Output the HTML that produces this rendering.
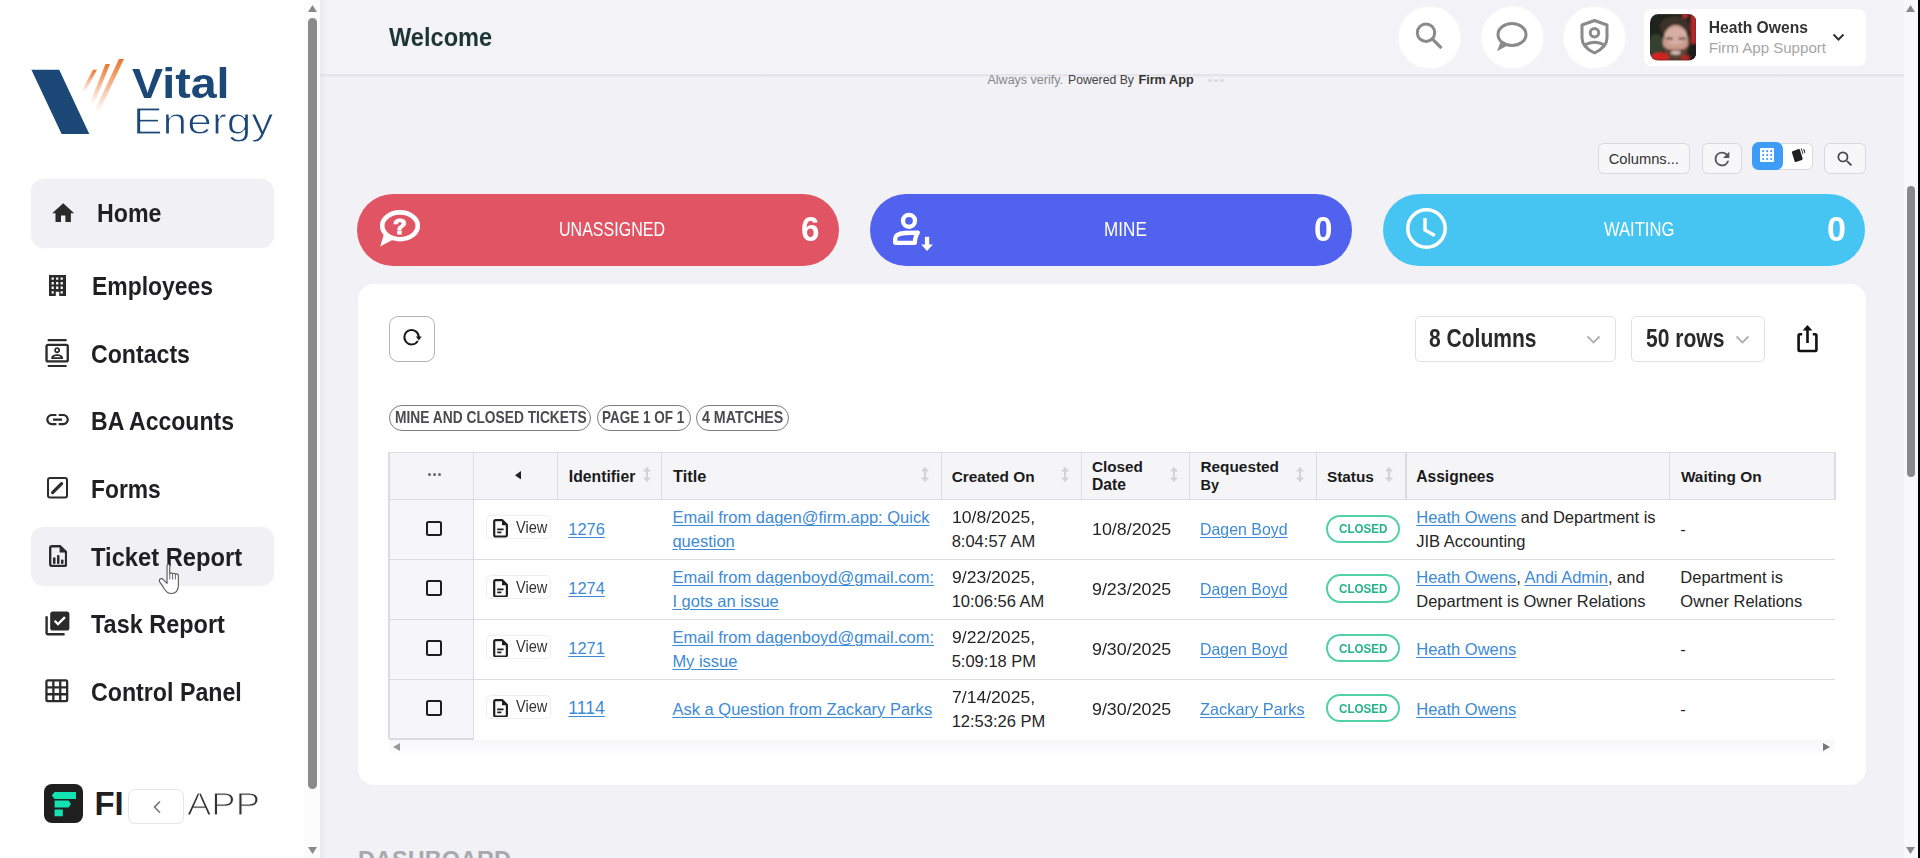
<!DOCTYPE html><html><head><meta charset="utf-8"><style>
html,body{margin:0;padding:0;}
body{width:1920px;height:858px;overflow:hidden;position:relative;background:#f1f1f6;font-family:"Liberation Sans",sans-serif;}
.t{position:absolute;white-space:nowrap;line-height:1;}
svg{display:block;}
u{text-decoration:underline;text-underline-offset:2px;text-decoration-thickness:1px;}
</style></head><body>
<div style="position:absolute;left:0px;top:0px;width:304px;height:858px;background:#fff;"></div>
<div style="position:absolute;left:304px;top:0px;width:16px;height:858px;background:#fcfcfd;"></div>
<div style="position:absolute;left:308px;top:17.7px;width:8.5px;height:771px;background:#8a8a8a;border-radius:5px;"></div>
<svg style="position:absolute;left:308px;top:5px;" width="9" height="7" viewBox="0 0 9 7"><polygon points="4.5,0 9,7 0,7" fill="#8a8a8a"/></svg>
<svg style="position:absolute;left:308px;top:847px;" width="9" height="7" viewBox="0 0 9 7"><polygon points="0,0 9,0 4.5,7" fill="#8a8a8a"/></svg>
<svg style="position:absolute;left:0px;top:0px;" width="300" height="160" viewBox="0 0 300 160">
<defs>
<linearGradient id="og1" x1="0" y1="0" x2="0" y2="1"><stop offset="0" stop-color="#e8772e"/><stop offset="1" stop-color="#e8772e" stop-opacity="0"/></linearGradient>
</defs>
<polygon points="31.4,69.8 59.2,69.8 89.3,133.9 61.6,133.9" fill="#1b4877"/>
<polygon points="93,69.8 97,69.8 85,92 81,92" fill="url(#og1)"/>
<polygon points="105.5,64 110,64 94,104 89.5,104" fill="url(#og1)"/>
<polygon points="119,59 124,59 99,112 94,112" fill="url(#og1)"/>
</svg>
<div class="t" style="left:131.60px;top:63.30px;font-size:42.00px;font-weight:700;color:#1b4877;transform:scale(1.1086,1.0000);transform-origin:0 35.55px;">Vital</div>
<div class="t" style="left:133.20px;top:102.90px;font-size:37.00px;font-weight:400;color:#1b4877;transform:scale(1.1983,1.0000);transform-origin:0 31.32px;-webkit-text-stroke:0.9px #fff;">Energy</div>
<div style="position:absolute;left:31px;top:179px;width:243px;height:69px;background:#f1f1f5;border-radius:13px;box-shadow:0 0 3px rgba(0,0,0,0.035);"></div>
<div style="position:absolute;left:31px;top:527px;width:243px;height:59px;background:#f1f1f5;border-radius:13px;box-shadow:0 0 3px rgba(0,0,0,0.035);"></div>
<div class="t" style="left:97.30px;top:202.34px;font-size:24.00px;font-weight:700;color:#1f1f24;transform:scale(0.9670,1.0900);transform-origin:0 20.32px;">Home</div>
<div class="t" style="left:91.80px;top:275.43px;font-size:24.00px;font-weight:700;color:#1f1f24;transform:scale(0.9546,1.0900);transform-origin:0 20.32px;">Employees</div>
<div class="t" style="left:91.20px;top:342.93px;font-size:24.00px;font-weight:700;color:#1f1f24;transform:scale(0.9640,1.0900);transform-origin:0 20.32px;">Contacts</div>
<div class="t" style="left:91.20px;top:409.93px;font-size:24.00px;font-weight:700;color:#1f1f24;transform:scale(0.9604,1.0900);transform-origin:0 20.32px;">BA Accounts</div>
<div class="t" style="left:91.20px;top:477.65px;font-size:24.00px;font-weight:700;color:#1f1f24;transform:scale(0.9516,1.0900);transform-origin:0 20.32px;">Forms</div>
<div class="t" style="left:91.20px;top:546.15px;font-size:24.00px;font-weight:700;color:#1f1f24;transform:scale(0.9886,1.0900);transform-origin:0 20.32px;">Ticket Report</div>
<div class="t" style="left:91.20px;top:613.04px;font-size:24.00px;font-weight:700;color:#1f1f24;transform:scale(0.9774,1.0900);transform-origin:0 20.32px;">Task Report</div>
<div class="t" style="left:91.20px;top:681.15px;font-size:24.00px;font-weight:700;color:#1f1f24;transform:scale(0.9667,1.0900);transform-origin:0 20.32px;">Control Panel</div>
<svg style="position:absolute;left:49.8px;top:199.7px;" width="26.4" height="26.4" viewBox="0 0 24 24"><path fill="#2b2b2b" d="M10 20v-6h4v6h5v-8h3L12 3 2 12h3v8z"/></svg>
<svg style="position:absolute;left:49.4px;top:275px;" width="17" height="21" viewBox="0 0 17 21"><path fill="#2b2b2b" fill-rule="evenodd" d="M0 0H17V21H10.2V16.8H6.8V21H0Z M2.60 2.40h2.2v2.4h-2.2z M7.10 2.40h2.2v2.4h-2.2z M11.60 2.40h2.2v2.4h-2.2z M2.60 7.00h2.2v2.4h-2.2z M7.10 7.00h2.2v2.4h-2.2z M11.60 7.00h2.2v2.4h-2.2z M2.60 11.60h2.2v2.4h-2.2z M7.10 11.60h2.2v2.4h-2.2z M11.60 11.60h2.2v2.4h-2.2z M2.60 16.20h2.2v2.4h-2.2z M11.60 16.20h2.2v2.4h-2.2z "/></svg>
<svg style="position:absolute;left:43.2px;top:338.7px;" width="28.3" height="28.3" viewBox="0 0 24 24"><path fill="#2b2b2b" d="M20 0H4v2h16V0zM4 24h16v-2H4v2zM20 4H4c-1.1 0-2 .9-2 2v12c0 1.1.9 2 2 2h16c1.1 0 2-.9 2-2V6c0-1.1-.9-2-2-2zm0 14H4V6h16v12zm-8-6c1.38 0 2.5-1.12 2.5-2.5S13.38 7 12 7 9.5 8.12 9.5 9.5 10.62 12 12 12zm0-3.5c.55 0 1 .45 1 1s-.45 1-1 1-1-.45-1-1 .45-1 1-1zm5 7.49C17 13.9 13.69 13 12 13s-5 .9-5 2.99V17h10v-1.01zm-8.19-.49c.61-.52 2.03-1 3.19-1 1.17 0 2.59.48 3.2 1H8.81z"/></svg>
<svg style="position:absolute;left:44.3px;top:406.3px;" width="27.1" height="27.1" viewBox="0 0 24 24"><path fill="#2b2b2b" d="M3.9 12c0-1.71 1.39-3.1 3.1-3.1h4V7H7c-2.76 0-5 2.24-5 5s2.24 5 5 5h4v-1.9H7c-1.71 0-3.1-1.39-3.1-3.1zM8 13h8v-2H8v2zm9-6h-4v1.9h4c1.71 0 3.1 1.39 3.1 3.1s-1.39 3.1-3.1 3.1h-4V17h4c2.76 0 5-2.24 5-5s-2.24-5-5-5z"/></svg>
<svg style="position:absolute;left:47.2px;top:477px;" width="21" height="21.5" viewBox="0 0 21 21.5"><rect x="1" y="1" width="19" height="19.5" rx="2" fill="none" stroke="#2b2b2b" stroke-width="2"/><path d="M5.6 15.6 L14.6 6.6" stroke="#2b2b2b" stroke-width="3.2" stroke-linecap="round"/></svg>
<svg style="position:absolute;left:48.6px;top:544.5px;" width="18.3" height="22.2" viewBox="0 0 18.3 22.2"><path d="M1.2 3 Q1.2 1.2 3 1.2 H11 L17.1 7 V19.2 Q17.1 21 15.3 21 H3 Q1.2 21 1.2 19.2 Z" fill="none" stroke="#2b2b2b" stroke-width="2.4"/><path d="M10.6 1 V7.6 H17.3 Z" fill="#2b2b2b"/><rect x="4" y="12.3" width="2.5" height="6.8" rx="1" fill="#2b2b2b"/><rect x="8" y="10" width="2.5" height="9.1" rx="1" fill="#2b2b2b"/><rect x="12" y="14.5" width="2.5" height="4.6" rx="1" fill="#2b2b2b"/></svg>
<svg style="position:absolute;left:43px;top:608.9px;" width="28.8" height="28.8" viewBox="0 0 24 24"><path fill="#2b2b2b" d="M20 2H8c-1.1 0-2 .9-2 2v12c0 1.1.9 2 2 2h12c1.1 0 2-.9 2-2V4c0-1.1-.9-2-2-2zm-7.53 12L9 10.5l1.4-1.41 2.07 2.08L17.6 6 19 7.41 12.47 14zM4 20h14v2H4c-1.1 0-2-.9-2-2V6h2v14z"/></svg>
<svg style="position:absolute;left:43.1px;top:677.1px;" width="27.6" height="27.6" viewBox="0 0 24 24"><path fill="#2b2b2b" d="M20 2H4c-1.1 0-2 .9-2 2v16c0 1.1.9 2 2 2h16c1.1 0 2-.9 2-2V4c0-1.1-.9-2-2-2zM8 20H4v-4h4v4zm0-6H4v-4h4v4zm0-6H4V4h4v4zm6 12h-4v-4h4v4zm0-6h-4v-4h4v4zm0-6h-4V4h4v4zm6 12h-4v-4h4v4zm0-6h-4v-4h4v4zm0-6h-4V4h4v4z"/></svg>
<div style="position:absolute;left:43.8px;top:783.6px;width:39.3px;height:39.4px;background:#1f1f1f;border-radius:8px;"></div>
<svg style="position:absolute;left:43.8px;top:783.6px;" width="39.3" height="39.4" viewBox="0 0 39.3 39.4"><path fill="#12e3b0" d="M10.6 8 H32 V15 H10.6 L7.8 11.5 Z M10.6 16.6 H24.6 L27 20.1 L24.6 23.6 H10.6 Z M10.6 25.5 H18.8 V32.3 H10.6 Z"/></svg>
<div class="t" style="left:94.40px;top:787.80px;font-size:32.86px;font-weight:700;color:#1f1f1f;">FI</div>
<div class="t" style="left:187.30px;top:788.81px;font-size:31.00px;font-weight:400;color:#333;transform:scale(1.1765,1.0000);transform-origin:0 26.24px;-webkit-text-stroke:1px #fff;">APP</div>
<div style="position:absolute;left:127.7px;top:788.9px;width:56.7px;height:35.2px;background:#fff;border:1px solid #e6e6ea;border-radius:7px;box-sizing:border-box;"></div>
<svg style="position:absolute;left:151px;top:799.8px;" width="12" height="14.2" viewBox="0 0 12 14.2"><path d="M9 1.5 L3.5 7.1 L9 12.7" fill="none" stroke="#777" stroke-width="1.6"/></svg>
<div style="position:absolute;left:320px;top:0px;width:1584px;height:75px;background:#f2f2f7;"></div>
<div style="position:absolute;left:320px;top:73.5px;width:1584px;height:2px;background:#e4e4ea;"></div>
<div style="position:absolute;left:320px;top:75.5px;width:1584px;height:2.5px;background:linear-gradient(rgba(0,0,0,0.03),rgba(0,0,0,0));"></div>
<div class="t" style="left:389.00px;top:27.36px;font-size:23.60px;font-weight:700;color:#1e3535;transform:scale(1.0000,1.1100);transform-origin:0 19.98px;">Welcome</div>
<div style="position:absolute;left:320px;top:0px;width:6px;height:858px;background:linear-gradient(90deg,rgba(0,0,0,0.035),rgba(0,0,0,0));"></div>
<div style="position:absolute;left:1398.5px;top:7px;width:61px;height:61px;background:#fff;border-radius:50%;box-shadow:0 0 2px 1px rgba(255,255,255,0.7);"></div>
<div style="position:absolute;left:1481.5px;top:7px;width:61px;height:61px;background:#fff;border-radius:50%;box-shadow:0 0 2px 1px rgba(255,255,255,0.7);"></div>
<div style="position:absolute;left:1564.0px;top:7px;width:61px;height:61px;background:#fff;border-radius:50%;box-shadow:0 0 2px 1px rgba(255,255,255,0.7);"></div>
<svg style="position:absolute;left:1410px;top:16px;" width="40" height="40" viewBox="0 0 40 40"><circle cx="16" cy="16.7" r="8.7" fill="none" stroke="#8a8a8a" stroke-width="3"/><path d="M22.5 23.2 L31.5 32.2" stroke="#8a8a8a" stroke-width="3.2" stroke-linecap="butt"/></svg>
<svg style="position:absolute;left:1492px;top:16px;" width="40" height="40" viewBox="0 0 40 40"><ellipse cx="20" cy="18.5" rx="14" ry="11" fill="none" stroke="#8a8a8a" stroke-width="3"/><path d="M8.5 26 L5 35.2 L15.5 29.5 Z" fill="#8a8a8a"/></svg>
<svg style="position:absolute;left:1574px;top:16px;" width="40" height="40" viewBox="0 0 40 40"><path d="M20.5 4.5 L33 9 V22 Q33 31 20.5 37 Q8 31 8 22 V9 Z" fill="none" stroke="#8a8a8a" stroke-width="3" stroke-linejoin="round"/><circle cx="20.5" cy="16.7" r="4.2" fill="none" stroke="#8a8a8a" stroke-width="3"/><path d="M10.5 29 Q20.5 23.5 30.5 29" fill="none" stroke="#8a8a8a" stroke-width="3"/></svg>
<div style="position:absolute;left:1643.75px;top:9.4px;width:222px;height:56.2px;background:#fff;border-radius:7px;"></div>
<svg style="position:absolute;left:1649.5px;top:14px;" width="46.5" height="46.7" viewBox="0 0 47 47">
<defs><clipPath id="av"><rect width="47" height="47" rx="8.5"/></clipPath>
<filter id="bl" x="-20%" y="-20%" width="140%" height="140%"><feGaussianBlur stdDeviation="1.2"/></filter></defs>
<g clip-path="url(#av)">
<rect width="47" height="47" fill="#1f231d"/>
<g filter="url(#bl)">
<ellipse cx="6" cy="32" rx="8" ry="12" fill="#34402e"/>
<rect x="41" y="0" width="6" height="30" fill="#b82626"/>
<rect x="33" y="-2" width="5" height="6" fill="#c62a2a"/>
<ellipse cx="25" cy="13" rx="15" ry="11" fill="#3b3029"/>
<ellipse cx="26" cy="28" rx="13" ry="17" fill="#c99b8c"/>
<ellipse cx="26" cy="22" rx="11" ry="9" fill="#d6aea3"/>
<rect x="16" y="23.5" width="7" height="2.5" fill="#7a5a50"/>
<rect x="29" y="23.5" width="7" height="2.5" fill="#7a5a50"/>
<path d="M13 31 Q14 46 26 47 Q38 46 39 31 Q36 37 26 36 Q16 37 13 31 Z" fill="#5e4234"/>
<ellipse cx="26" cy="39" rx="5" ry="2" fill="#d9c0b5"/>
<path d="M0 47 L2 41 Q10 37 17 40 L20 47 Z" fill="#d42424"/>
<path d="M31 47 L33 42 Q38 40 41 43 L42 47 Z" fill="#b62222"/>
<rect x="40" y="30" width="7" height="17" fill="#1b1b1b"/>
</g>
</g></svg>
<div class="t" style="left:1708.75px;top:19.77px;font-size:15.67px;font-weight:700;color:#333;transform:scale(1.0000,1.0600);transform-origin:0 13.26px;">Heath Owens</div>
<div class="t" style="left:1708.75px;top:40.01px;font-size:15.07px;font-weight:400;color:#a6a6a6;">Firm App Support</div>
<svg style="position:absolute;left:1831.5px;top:32.5px;" width="13" height="9" viewBox="0 0 13 9"><path d="M1.5 1.5 L6.5 6.5 L11.5 1.5" fill="none" stroke="#333" stroke-width="2"/></svg>
<div style="position:absolute;left:320px;top:75px;width:1584px;height:20px;overflow:hidden;">
<div style="position:absolute;left:-320px;top:-75px;width:1920px;height:100px;">
<div class="t" style="left:987.50px;top:74.40px;font-size:12.50px;font-weight:400;color:#888;">Always verify.</div>
<div class="t" style="left:1068.00px;top:74.41px;font-size:12.24px;font-weight:400;color:#444;">Powered By</div>
<div class="t" style="left:1138.40px;top:74.41px;font-size:12.71px;font-weight:700;color:#333;">Firm App</div>
</div></div>
<div style="position:absolute;left:1208px;top:79px;width:4px;height:3px;background:#dcdce2;border-radius:2px;"></div>
<div style="position:absolute;left:1214px;top:79px;width:4px;height:3px;background:#dcdce2;border-radius:2px;"></div>
<div style="position:absolute;left:1220px;top:79px;width:4px;height:3px;background:#dcdce2;border-radius:2px;"></div>
<div style="position:absolute;left:1904px;top:0px;width:14px;height:858px;background:#f8f8fa;"></div>
<div style="position:absolute;left:1918px;top:0px;width:2px;height:858px;background:#000;"></div>
<div style="position:absolute;left:1906.5px;top:185.8px;width:8px;height:290.8px;background:#8a8a8a;border-radius:4px;"></div>
<svg style="position:absolute;left:1906px;top:5px;" width="9" height="7" viewBox="0 0 9 7"><polygon points="4.5,0 9,7 0,7" fill="#8a8a8a"/></svg>
<svg style="position:absolute;left:1906px;top:847px;" width="9" height="7" viewBox="0 0 9 7"><polygon points="0,0 9,0 4.5,7" fill="#8a8a8a"/></svg>
<div style="position:absolute;left:1597.5px;top:143.4px;width:92.8px;height:31px;background:#f7f7f9;border:1px solid #d8d8dd;border-radius:6px;box-sizing:border-box;"></div>
<div class="t" style="left:1608.75px;top:152.01px;font-size:14.70px;font-weight:400;color:#333;">Columns...</div>
<div style="position:absolute;left:1701.6px;top:143.4px;width:40.7px;height:31px;background:#f7f7f9;border:1px solid #d8d8dd;border-radius:6px;box-sizing:border-box;"></div>
<svg style="position:absolute;left:1711px;top:148px;" width="22" height="22" viewBox="0 0 24 24"><path fill="#555" d="M17.65 6.35A7.958 7.958 0 0 0 12 4a8 8 0 1 0 7.73 10h-2.08A6 6 0 1 1 12 6c1.66 0 3.14.69 4.22 1.78L13 11h7V4l-2.35 2.35z"/></svg>
<div style="position:absolute;left:1751.6px;top:143.4px;width:61.4px;height:26.8px;background:#fff;border:1px solid #d8d8dd;border-radius:6px;box-sizing:border-box;"></div>
<div style="position:absolute;left:1751.6px;top:141.6px;width:31.4px;height:28.7px;background:#3d9cf6;border-radius:7px;"></div>
<svg style="position:absolute;left:1760px;top:148px;" width="14.2" height="14" viewBox="0 0 14.2 14"><rect width="14.2" height="14" rx="1" fill="#fff"/><g fill="#3d9cf6"><circle cx="3.2" cy="3.2" r="1.1"/><circle cx="3.2" cy="7.1" r="1.1"/><circle cx="3.2" cy="11.0" r="1.1"/><circle cx="7.2" cy="3.2" r="1.1"/><circle cx="7.2" cy="7.1" r="1.1"/><circle cx="7.2" cy="11.0" r="1.1"/><circle cx="11.2" cy="3.2" r="1.1"/><circle cx="11.2" cy="7.1" r="1.1"/><circle cx="11.2" cy="11.0" r="1.1"/></g></svg>
<svg style="position:absolute;left:1790px;top:146px;" width="16" height="18" viewBox="0 0 16 18"><path d="M2.6 5.2 L8.6 3 Q9.6 2.7 9.9 3.7 L12.6 12.6 Q12.9 13.6 11.9 13.9 L5.9 16 Q4.9 16.3 4.6 15.3 L1.9 6.4 Q1.6 5.5 2.6 5.2 Z" fill="#1f1f1f"/><path d="M10.8 2.5 L11.6 2.2 L13.4 7.8 L12.8 8.4 Z M13.2 3.2 L14.2 2.9 L15.4 6.5 L14.6 7.2 Z" fill="#1f1f1f"/></svg>
<div style="position:absolute;left:1824.4px;top:143.4px;width:41.2px;height:31px;background:#f7f7f9;border:1px solid #d8d8dd;border-radius:6px;box-sizing:border-box;"></div>
<svg style="position:absolute;left:1835px;top:149px;" width="20" height="20" viewBox="0 0 24 24"><path fill="#444" d="M15.5 14h-.79l-.28-.27A6.471 6.471 0 0 0 16 9.5 6.5 6.5 0 1 0 9.5 16c1.61 0 3.09-.59 4.23-1.57l.27.28v.79l5 4.99L20.49 19l-4.99-5zm-6 0C7.01 14 5 11.99 5 9.5S7.01 5 9.5 5 14 7.01 14 9.5 11.99 14 9.5 14z"/></svg>
<div style="position:absolute;left:357.4px;top:193.5px;width:482px;height:72.3px;background:#e05463;border-radius:37px;"></div>
<div class="t" style="left:558.80px;top:221.23px;font-size:18.00px;font-weight:400;color:#fff;transform:scale(0.8908,1.0900);transform-origin:0 15.24px;">UNASSIGNED</div>
<div class="t" style="left:801.00px;top:212.50px;font-size:33.00px;font-weight:700;color:#fff;transform:scale(1.0082,1.0500);transform-origin:0 27.93px;">6</div>
<div style="position:absolute;left:869.8px;top:193.5px;width:482px;height:72.3px;background:#5062ee;border-radius:37px;"></div>
<div class="t" style="left:1104.00px;top:221.23px;font-size:18.00px;font-weight:400;color:#fff;transform:scale(0.9511,1.0900);transform-origin:0 15.24px;">MINE</div>
<div class="t" style="left:1314.00px;top:212.50px;font-size:33.00px;font-weight:700;color:#fff;transform:scale(1.0027,1.0500);transform-origin:0 27.93px;">0</div>
<div style="position:absolute;left:1383.4px;top:193.5px;width:482px;height:72.3px;background:#46c5f3;border-radius:37px;"></div>
<div class="t" style="left:1603.60px;top:221.23px;font-size:18.00px;font-weight:400;color:#fff;transform:scale(0.9214,1.0900);transform-origin:0 15.24px;">WAITING</div>
<div class="t" style="left:1827.00px;top:212.50px;font-size:33.00px;font-weight:700;color:#fff;transform:scale(1.0354,1.0500);transform-origin:0 27.93px;">0</div>
<svg style="position:absolute;left:376px;top:206px;" width="48" height="44" viewBox="0 0 48 44"><ellipse cx="24" cy="19.8" rx="17.8" ry="13.4" fill="none" stroke="#fff" stroke-width="4.6"/><path d="M8.5 26 L4.2 40.5 L19 32.5 Z" fill="#fff"/><text x="24" y="28.3" text-anchor="middle" font-family="Liberation Sans" font-weight="700" font-size="22" fill="#fff" stroke="#fff" stroke-width="1.2">?</text></svg>
<svg style="position:absolute;left:885px;top:205px;" width="60" height="53" viewBox="0 0 60 53"><circle cx="24" cy="15.8" r="6" fill="none" stroke="#fff" stroke-width="4.3"/><path d="M10.2 37.8 V33.5 Q10.2 28.8 20 28 L32.8 27.6 Q30.2 31 29.8 37.8 Z" fill="none" stroke="#fff" stroke-width="4.3" stroke-linejoin="round"/><rect x="39.9" y="31.8" width="4.3" height="8.5" fill="#fff"/><polygon points="36.2,39.4 47.9,39.4 42,46" fill="#fff"/></svg>
<svg style="position:absolute;left:1404px;top:206px;" width="46" height="46" viewBox="0 0 46 46"><circle cx="22.5" cy="22.5" r="18.7" fill="none" stroke="#fff" stroke-width="3.5"/><path d="M21 12 V24 L30.8 29.5" fill="none" stroke="#fff" stroke-width="3.4"/></svg>
<div style="position:absolute;left:358px;top:284px;width:1508px;height:501px;background:#fff;border-radius:16px;"></div>
<div style="position:absolute;left:389px;top:315.8px;width:46.4px;height:46.4px;background:#fff;border:1.6px solid #b3b3b6;border-radius:9px;box-sizing:border-box;"></div>
<svg style="position:absolute;left:401px;top:327px;" width="22" height="22" viewBox="0 0 22 22"><path d="M16.8 13.9 A7.2 7.2 0 1 1 17.8 10.3" fill="none" stroke="#1a1a1a" stroke-width="1.9"/><path d="M14.9 9.6 L20.7 9.6 L17.8 13.4 Z" fill="#1a1a1a"/></svg>
<div style="position:absolute;left:389px;top:404.8px;width:202.39999999999998px;height:26.2px;border:1.8px solid #7c7c82;border-radius:14px;box-sizing:border-box;"></div>
<div class="t" style="left:394.80px;top:409.89px;font-size:15.00px;font-weight:700;color:#4a4a50;transform:scale(0.9185,1.0800);transform-origin:0 12.70px;">MINE AND CLOSED TICKETS</div>
<div style="position:absolute;left:596.6px;top:404.8px;width:94.0px;height:26.2px;border:1.8px solid #7c7c82;border-radius:14px;box-sizing:border-box;"></div>
<div class="t" style="left:602.40px;top:409.89px;font-size:15.00px;font-weight:700;color:#4a4a50;transform:scale(0.8993,1.0800);transform-origin:0 12.70px;">PAGE 1 OF 1</div>
<div style="position:absolute;left:696.4px;top:404.8px;width:92.20000000000005px;height:26.2px;border:1.8px solid #7c7c82;border-radius:14px;box-sizing:border-box;"></div>
<div class="t" style="left:702.00px;top:409.89px;font-size:15.00px;font-weight:700;color:#4a4a50;transform:scale(0.9492,1.0800);transform-origin:0 12.70px;">4 MATCHES</div>
<div style="position:absolute;left:1414.7px;top:316.3px;width:201px;height:46px;background:#fff;border:1px solid #e2e2e6;border-radius:5px;box-sizing:border-box;"></div>
<div class="t" style="left:1428.75px;top:328.69px;font-size:22.00px;font-weight:700;color:#2a2a2a;transform:scale(0.9560,1.1300);transform-origin:0 18.62px;">8 Columns</div>
<svg style="position:absolute;left:1586px;top:335px;" width="15" height="9" viewBox="0 0 15 9"><path d="M1.5 1.5 L7.5 7.5 L13.5 1.5" fill="none" stroke="#b0b0b0" stroke-width="1.8"/></svg>
<div style="position:absolute;left:1631.4px;top:316.3px;width:133.2px;height:46px;background:#fff;border:1px solid #e2e2e6;border-radius:5px;box-sizing:border-box;"></div>
<div class="t" style="left:1646.00px;top:328.69px;font-size:22.00px;font-weight:700;color:#2a2a2a;transform:scale(0.9579,1.1300);transform-origin:0 18.62px;">50 rows</div>
<svg style="position:absolute;left:1734.5px;top:335px;" width="15" height="9" viewBox="0 0 15 9"><path d="M1.5 1.5 L7.5 7.5 L13.5 1.5" fill="none" stroke="#b0b0b0" stroke-width="1.8"/></svg>
<svg style="position:absolute;left:1795px;top:322px;" width="24" height="31" viewBox="0 0 24 31"><path d="M7.2 12.3 H4.8 Q3.6 12.3 3.6 13.5 V27.8 Q3.6 29 4.8 29 H20.2 Q21.4 29 21.4 27.8 V13.5 Q21.4 12.3 20.2 12.3 H17.8" fill="none" stroke="#111" stroke-width="2.6" stroke-linejoin="round"/><path d="M12.5 21 V6" stroke="#111" stroke-width="2.6"/><path d="M7.6 8.4 L12.5 3 L17.4 8.4 Z" fill="#111"/></svg>
<div style="position:absolute;left:389px;top:452px;width:1446px;height:47.5px;background:#f5f5f8;"></div>
<div style="position:absolute;left:389px;top:499.5px;width:84.69999999999999px;height:239.5px;background:#f6f6f8;"></div>
<div style="position:absolute;left:389px;top:451.5px;width:1446px;height:1.2px;background:#dcdce0;"></div>
<div style="position:absolute;left:388.4px;top:452px;width:1.2px;height:47.5px;background:#dcdce0;"></div>
<div style="position:absolute;left:473.09999999999997px;top:452px;width:1.2px;height:47.5px;background:#dcdce0;"></div>
<div style="position:absolute;left:557.0px;top:452px;width:1.2px;height:47.5px;background:#dcdce0;"></div>
<div style="position:absolute;left:661.0px;top:452px;width:1.2px;height:47.5px;background:#dcdce0;"></div>
<div style="position:absolute;left:940.6999999999999px;top:452px;width:1.2px;height:47.5px;background:#dcdce0;"></div>
<div style="position:absolute;left:1081.3000000000002px;top:452px;width:1.2px;height:47.5px;background:#dcdce0;"></div>
<div style="position:absolute;left:1189.0px;top:452px;width:1.2px;height:47.5px;background:#dcdce0;"></div>
<div style="position:absolute;left:1315.6000000000001px;top:452px;width:1.2px;height:47.5px;background:#dcdce0;"></div>
<div style="position:absolute;left:1405.4px;top:452px;width:1.2px;height:47.5px;background:#dcdce0;"></div>
<div style="position:absolute;left:1668.9px;top:452px;width:1.2px;height:47.5px;background:#dcdce0;"></div>
<div style="position:absolute;left:1834.4px;top:452px;width:1.2px;height:47.5px;background:#dcdce0;"></div>
<div style="position:absolute;left:389px;top:498.9px;width:1446px;height:1.2px;background:#dcdce0;"></div>
<div style="position:absolute;left:389px;top:558.6999999999999px;width:1446px;height:1.2px;background:#dcdce0;"></div>
<div style="position:absolute;left:389px;top:618.6px;width:1446px;height:1.2px;background:#dcdce0;"></div>
<div style="position:absolute;left:389px;top:678.6px;width:1446px;height:1.2px;background:#dcdce0;"></div>
<div style="position:absolute;left:389px;top:738.4px;width:84.69999999999999px;height:1.2px;background:#dcdce0;"></div>
<div style="position:absolute;left:388.4px;top:499.5px;width:1.2px;height:239.5px;background:#dcdce0;"></div>
<div style="position:absolute;left:473.09999999999997px;top:499.5px;width:1.2px;height:239.5px;background:#dcdce0;"></div>
<div style="position:absolute;left:427.5px;top:472.9px;width:3.2px;height:3.2px;background:#6a6a6a;border-radius:50%;"></div>
<div style="position:absolute;left:432.7px;top:472.9px;width:3.2px;height:3.2px;background:#6a6a6a;border-radius:50%;"></div>
<div style="position:absolute;left:437.9px;top:472.9px;width:3.2px;height:3.2px;background:#6a6a6a;border-radius:50%;"></div>
<svg style="position:absolute;left:515.4px;top:470.7px;" width="6" height="8.5" viewBox="0 0 6 8.5"><polygon points="6,0 6,8.5 0,4.25" fill="#222"/></svg>
<div class="t" style="left:568.80px;top:468.60px;font-size:15.75px;font-weight:700;color:#1a1a1a;">Identifier</div>
<div class="t" style="left:673.00px;top:467.60px;font-size:16.34px;font-weight:700;color:#1a1a1a;">Title</div>
<div class="t" style="left:951.70px;top:468.60px;font-size:15.40px;font-weight:700;color:#1a1a1a;">Created On</div>
<div class="t" style="left:1092.00px;top:458.90px;font-size:15.24px;font-weight:700;color:#1a1a1a;">Closed</div>
<div class="t" style="left:1092.00px;top:477.31px;font-size:15.68px;font-weight:700;color:#1a1a1a;">Date</div>
<div class="t" style="left:1200.50px;top:458.91px;font-size:15.35px;font-weight:700;color:#1a1a1a;">Requested</div>
<div class="t" style="left:1200.50px;top:478.30px;font-size:14.47px;font-weight:700;color:#1a1a1a;">By</div>
<div class="t" style="left:1326.90px;top:468.60px;font-size:15.38px;font-weight:700;color:#1a1a1a;">Status</div>
<div class="t" style="left:1416.25px;top:468.61px;font-size:15.59px;font-weight:700;color:#1a1a1a;">Assignees</div>
<div class="t" style="left:1680.90px;top:468.62px;font-size:15.40px;font-weight:700;color:#1a1a1a;">Waiting On</div>
<svg style="position:absolute;left:642.4px;top:465.5px;" width="10" height="17" viewBox="0 0 10 17"><path d="M5 2 V15" stroke="#d4d4d8" stroke-width="2"/><path d="M1 5.5 L5 0.8 L9 5.5 Z M1 11.5 L5 16.2 L9 11.5 Z" fill="#d4d4d8"/></svg>
<svg style="position:absolute;left:920.3px;top:465.5px;" width="10" height="17" viewBox="0 0 10 17"><path d="M5 2 V15" stroke="#d4d4d8" stroke-width="2"/><path d="M1 5.5 L5 0.8 L9 5.5 Z M1 11.5 L5 16.2 L9 11.5 Z" fill="#d4d4d8"/></svg>
<svg style="position:absolute;left:1060.3px;top:465.5px;" width="10" height="17" viewBox="0 0 10 17"><path d="M5 2 V15" stroke="#d4d4d8" stroke-width="2"/><path d="M1 5.5 L5 0.8 L9 5.5 Z M1 11.5 L5 16.2 L9 11.5 Z" fill="#d4d4d8"/></svg>
<svg style="position:absolute;left:1168.7px;top:465.5px;" width="10" height="17" viewBox="0 0 10 17"><path d="M5 2 V15" stroke="#d4d4d8" stroke-width="2"/><path d="M1 5.5 L5 0.8 L9 5.5 Z M1 11.5 L5 16.2 L9 11.5 Z" fill="#d4d4d8"/></svg>
<svg style="position:absolute;left:1295px;top:465.5px;" width="10" height="17" viewBox="0 0 10 17"><path d="M5 2 V15" stroke="#d4d4d8" stroke-width="2"/><path d="M1 5.5 L5 0.8 L9 5.5 Z M1 11.5 L5 16.2 L9 11.5 Z" fill="#d4d4d8"/></svg>
<svg style="position:absolute;left:1384.4px;top:465.5px;" width="10" height="17" viewBox="0 0 10 17"><path d="M5 2 V15" stroke="#d4d4d8" stroke-width="2"/><path d="M1 5.5 L5 0.8 L9 5.5 Z M1 11.5 L5 16.2 L9 11.5 Z" fill="#d4d4d8"/></svg>
<div style="position:absolute;left:426.3px;top:520.5px;width:15.7px;height:15.5px;border:2px solid #1e1e1e;border-radius:2.5px;box-sizing:border-box;"></div>
<div style="position:absolute;left:485.5px;top:515.0px;width:65.5px;height:24.1px;background:#fff;border:1px solid #eeeef0;border-radius:5px;box-sizing:border-box;"></div>
<svg style="position:absolute;left:492.9px;top:518.9px;" width="15.1" height="18.7" viewBox="0 0 15.1 18.7"><path d="M1.2 2.6 Q1.2 1.2 2.6 1.2 H9.3 L13.9 5.8 V16.1 Q13.9 17.5 12.5 17.5 H2.6 Q1.2 17.5 1.2 16.1 Z" fill="none" stroke="#1e1e1e" stroke-width="2.2" stroke-linejoin="round"/><path d="M9 1.2 V6.2 H13.9 Z" fill="#1e1e1e"/><path d="M4.2 10.3 H10.6 M4.2 13.4 H8.4" stroke="#1e1e1e" stroke-width="1.7"/></svg>
<div class="t" style="left:516.00px;top:520.72px;font-size:14.58px;font-weight:400;color:#333;transform:scale(1.0000,1.0800);transform-origin:0 12.34px;">View</div>
<div class="t" style="left:568.30px;top:520.50px;font-size:16.40px;font-weight:400;color:#3d8ad6;"><u>1276</u></div>
<div class="t" style="left:672.40px;top:509.21px;font-size:16.50px;font-weight:400;color:#3d8ad6;"><u>Email from dagen@firm.app: Quick</u></div>
<div class="t" style="left:672.40px;top:533.02px;font-size:16.50px;font-weight:400;color:#3d8ad6;"><u>question</u></div>
<div class="t" style="left:951.70px;top:509.21px;font-size:16.50px;font-weight:400;color:#252525;transform:scale(1.0650,1.0000);transform-origin:0 13.97px;">10/8/2025,</div>
<div class="t" style="left:951.70px;top:533.02px;font-size:16.50px;font-weight:400;color:#252525;">8:04:57 AM</div>
<div class="t" style="left:1092.00px;top:521.02px;font-size:16.50px;font-weight:400;color:#252525;transform:scale(1.0800,1.0000);transform-origin:0 13.97px;">10/8/2025</div>
<div class="t" style="left:1199.80px;top:521.02px;font-size:16.50px;font-weight:400;color:#3d8ad6;transform:scale(0.9637,1.0000);transform-origin:0 13.97px;"><u>Dagen Boyd</u></div>
<div style="position:absolute;left:1325.6px;top:514.5px;width:74.9px;height:28.3px;border:2px solid #52d1a6;border-radius:15px;box-sizing:border-box;"></div>
<div class="t" style="left:1339.30px;top:523.30px;font-size:12.50px;font-weight:700;color:#25b585;transform:scale(0.9309,1.0000);transform-origin:0 10.58px;">CLOSED</div>
<div class="t" style="left:1416.25px;top:509.21px;font-size:16.50px;font-weight:400;color:#252525;"><u style="color:#3d8ad6">Heath Owens</u> and Department is</div>
<div class="t" style="left:1416.25px;top:533.02px;font-size:16.50px;font-weight:400;color:#252525;">JIB Accounting</div>
<div class="t" style="left:1680.30px;top:521.02px;font-size:16.50px;font-weight:400;color:#252525;">-</div>
<div style="position:absolute;left:426.3px;top:580.3px;width:15.7px;height:15.5px;border:2px solid #1e1e1e;border-radius:2.5px;box-sizing:border-box;"></div>
<div style="position:absolute;left:485.5px;top:574.8px;width:65.5px;height:24.1px;background:#fff;border:1px solid #eeeef0;border-radius:5px;box-sizing:border-box;"></div>
<svg style="position:absolute;left:492.9px;top:578.6999999999999px;" width="15.1" height="18.7" viewBox="0 0 15.1 18.7"><path d="M1.2 2.6 Q1.2 1.2 2.6 1.2 H9.3 L13.9 5.8 V16.1 Q13.9 17.5 12.5 17.5 H2.6 Q1.2 17.5 1.2 16.1 Z" fill="none" stroke="#1e1e1e" stroke-width="2.2" stroke-linejoin="round"/><path d="M9 1.2 V6.2 H13.9 Z" fill="#1e1e1e"/><path d="M4.2 10.3 H10.6 M4.2 13.4 H8.4" stroke="#1e1e1e" stroke-width="1.7"/></svg>
<div class="t" style="left:516.00px;top:580.53px;font-size:14.58px;font-weight:400;color:#333;transform:scale(1.0000,1.0800);transform-origin:0 12.34px;">View</div>
<div class="t" style="left:568.30px;top:580.31px;font-size:16.40px;font-weight:400;color:#3d8ad6;"><u>1274</u></div>
<div class="t" style="left:672.40px;top:569.02px;font-size:16.50px;font-weight:400;color:#3d8ad6;"><u>Email from dagenboyd@gmail.com:</u></div>
<div class="t" style="left:672.40px;top:592.80px;font-size:16.50px;font-weight:400;color:#3d8ad6;"><u>I gots an issue</u></div>
<div class="t" style="left:951.70px;top:569.02px;font-size:16.50px;font-weight:400;color:#252525;transform:scale(1.0650,1.0000);transform-origin:0 13.97px;">9/23/2025,</div>
<div class="t" style="left:951.70px;top:592.80px;font-size:16.50px;font-weight:400;color:#252525;">10:06:56 AM</div>
<div class="t" style="left:1092.00px;top:580.80px;font-size:16.50px;font-weight:400;color:#252525;transform:scale(1.0800,1.0000);transform-origin:0 13.97px;">9/23/2025</div>
<div class="t" style="left:1199.80px;top:580.80px;font-size:16.50px;font-weight:400;color:#3d8ad6;transform:scale(0.9637,1.0000);transform-origin:0 13.97px;"><u>Dagen Boyd</u></div>
<div style="position:absolute;left:1325.6px;top:574.3px;width:74.9px;height:28.3px;border:2px solid #52d1a6;border-radius:15px;box-sizing:border-box;"></div>
<div class="t" style="left:1339.30px;top:583.10px;font-size:12.50px;font-weight:700;color:#25b585;transform:scale(0.9309,1.0000);transform-origin:0 10.58px;">CLOSED</div>
<div class="t" style="left:1416.25px;top:569.02px;font-size:16.50px;font-weight:400;color:#252525;"><u style="color:#3d8ad6">Heath Owens</u>, <u style="color:#3d8ad6">Andi Admin</u>, and</div>
<div class="t" style="left:1416.25px;top:592.80px;font-size:16.50px;font-weight:400;color:#252525;">Department is Owner Relations</div>
<div class="t" style="left:1680.30px;top:569.02px;font-size:16.50px;font-weight:400;color:#252525;">Department is</div>
<div class="t" style="left:1680.30px;top:592.80px;font-size:16.50px;font-weight:400;color:#252525;">Owner Relations</div>
<div style="position:absolute;left:426.3px;top:640.2px;width:15.7px;height:15.5px;border:2px solid #1e1e1e;border-radius:2.5px;box-sizing:border-box;"></div>
<div style="position:absolute;left:485.5px;top:634.7px;width:65.5px;height:24.1px;background:#fff;border:1px solid #eeeef0;border-radius:5px;box-sizing:border-box;"></div>
<svg style="position:absolute;left:492.9px;top:638.6px;" width="15.1" height="18.7" viewBox="0 0 15.1 18.7"><path d="M1.2 2.6 Q1.2 1.2 2.6 1.2 H9.3 L13.9 5.8 V16.1 Q13.9 17.5 12.5 17.5 H2.6 Q1.2 17.5 1.2 16.1 Z" fill="none" stroke="#1e1e1e" stroke-width="2.2" stroke-linejoin="round"/><path d="M9 1.2 V6.2 H13.9 Z" fill="#1e1e1e"/><path d="M4.2 10.3 H10.6 M4.2 13.4 H8.4" stroke="#1e1e1e" stroke-width="1.7"/></svg>
<div class="t" style="left:516.00px;top:640.44px;font-size:14.58px;font-weight:400;color:#333;transform:scale(1.0000,1.0800);transform-origin:0 12.34px;">View</div>
<div class="t" style="left:568.30px;top:640.22px;font-size:16.40px;font-weight:400;color:#3d8ad6;"><u>1271</u></div>
<div class="t" style="left:672.40px;top:628.91px;font-size:16.50px;font-weight:400;color:#3d8ad6;"><u>Email from dagenboyd@gmail.com:</u></div>
<div class="t" style="left:672.40px;top:652.70px;font-size:16.49px;font-weight:400;color:#3d8ad6;"><u>My issue</u></div>
<div class="t" style="left:951.70px;top:628.91px;font-size:16.50px;font-weight:400;color:#252525;transform:scale(1.0650,1.0000);transform-origin:0 13.97px;">9/22/2025,</div>
<div class="t" style="left:951.70px;top:652.71px;font-size:16.50px;font-weight:400;color:#252525;">5:09:18 PM</div>
<div class="t" style="left:1092.00px;top:640.71px;font-size:16.50px;font-weight:400;color:#252525;transform:scale(1.0800,1.0000);transform-origin:0 13.97px;">9/30/2025</div>
<div class="t" style="left:1199.80px;top:640.71px;font-size:16.50px;font-weight:400;color:#3d8ad6;transform:scale(0.9637,1.0000);transform-origin:0 13.97px;"><u>Dagen Boyd</u></div>
<div style="position:absolute;left:1325.6px;top:634.2px;width:74.9px;height:28.3px;border:2px solid #52d1a6;border-radius:15px;box-sizing:border-box;"></div>
<div class="t" style="left:1339.30px;top:643.01px;font-size:12.50px;font-weight:700;color:#25b585;transform:scale(0.9309,1.0000);transform-origin:0 10.58px;">CLOSED</div>
<div class="t" style="left:1416.25px;top:640.70px;font-size:16.50px;font-weight:400;color:#3d8ad6;"><u>Heath Owens</u></div>
<div class="t" style="left:1680.30px;top:640.71px;font-size:16.50px;font-weight:400;color:#252525;">-</div>
<div style="position:absolute;left:426.3px;top:700.2px;width:15.7px;height:15.5px;border:2px solid #1e1e1e;border-radius:2.5px;box-sizing:border-box;"></div>
<div style="position:absolute;left:485.5px;top:694.7px;width:65.5px;height:24.1px;background:#fff;border:1px solid #eeeef0;border-radius:5px;box-sizing:border-box;"></div>
<svg style="position:absolute;left:492.9px;top:698.6px;" width="15.1" height="18.7" viewBox="0 0 15.1 18.7"><path d="M1.2 2.6 Q1.2 1.2 2.6 1.2 H9.3 L13.9 5.8 V16.1 Q13.9 17.5 12.5 17.5 H2.6 Q1.2 17.5 1.2 16.1 Z" fill="none" stroke="#1e1e1e" stroke-width="2.2" stroke-linejoin="round"/><path d="M9 1.2 V6.2 H13.9 Z" fill="#1e1e1e"/><path d="M4.2 10.3 H10.6 M4.2 13.4 H8.4" stroke="#1e1e1e" stroke-width="1.7"/></svg>
<div class="t" style="left:516.00px;top:700.44px;font-size:14.58px;font-weight:400;color:#333;transform:scale(1.0000,1.0800);transform-origin:0 12.34px;">View</div>
<div class="t" style="left:568.30px;top:700.21px;font-size:17.59px;font-weight:400;color:#3d8ad6;"><u>1114</u></div>
<div class="t" style="left:672.40px;top:701.70px;font-size:16.53px;font-weight:400;color:#3d8ad6;"><u>Ask a Question from Zackary Parks</u></div>
<div class="t" style="left:951.70px;top:688.91px;font-size:16.50px;font-weight:400;color:#252525;transform:scale(1.0650,1.0000);transform-origin:0 13.97px;">7/14/2025,</div>
<div class="t" style="left:951.70px;top:712.71px;font-size:16.50px;font-weight:400;color:#252525;">12:53:26 PM</div>
<div class="t" style="left:1092.00px;top:700.71px;font-size:16.50px;font-weight:400;color:#252525;transform:scale(1.0800,1.0000);transform-origin:0 13.97px;">9/30/2025</div>
<div class="t" style="left:1199.80px;top:700.71px;font-size:16.50px;font-weight:400;color:#3d8ad6;transform:scale(0.9929,1.0000);transform-origin:0 13.97px;"><u>Zackary Parks</u></div>
<div style="position:absolute;left:1325.6px;top:694.2px;width:74.9px;height:28.3px;border:2px solid #52d1a6;border-radius:15px;box-sizing:border-box;"></div>
<div class="t" style="left:1339.30px;top:703.01px;font-size:12.50px;font-weight:700;color:#25b585;transform:scale(0.9309,1.0000);transform-origin:0 10.58px;">CLOSED</div>
<div class="t" style="left:1416.25px;top:700.70px;font-size:16.50px;font-weight:400;color:#3d8ad6;"><u>Heath Owens</u></div>
<div class="t" style="left:1680.30px;top:700.71px;font-size:16.50px;font-weight:400;color:#252525;">-</div>
<div style="position:absolute;left:389px;top:740px;width:1446px;height:13px;background:linear-gradient(#f7f7f9,#fcfcfd);"></div>
<svg style="position:absolute;left:393px;top:742.5px;" width="7" height="8" viewBox="0 0 7 8"><polygon points="7,0 7,8 0,4" fill="#999"/></svg>
<svg style="position:absolute;left:1823px;top:742.5px;" width="7" height="8" viewBox="0 0 7 8"><polygon points="0,0 0,8 7,4" fill="#777"/></svg>
<svg style="position:absolute;left:157px;top:561.5px;" width="27.5" height="33" viewBox="0 0 26 33"><path d="M9.3 3.2 Q10.6 1.2 12 3.2 V11.5 Q13.4 10.2 14.8 11.8 Q16.2 10.6 17.6 12.2 Q19.2 11.2 20.6 13 V23 Q20.6 31.5 13.5 31.5 Q9.5 31.5 7 27.5 L1.8 19.6 Q1 17.6 2.8 16.8 Q4.3 16.3 5.8 17.8 L9.3 21.3 Z" fill="#fff" stroke="#555" stroke-width="1.1" stroke-linejoin="round"/><path d="M12 11.5 V17.5 M14.8 11.8 V17.5 M17.6 12.2 V17.5" stroke="#555" stroke-width="0.9"/></svg>
<div class="t" style="left:358.00px;top:849.01px;font-size:23.54px;font-weight:700;color:#a8a8ad;">DASHBOARD</div>
</body></html>
